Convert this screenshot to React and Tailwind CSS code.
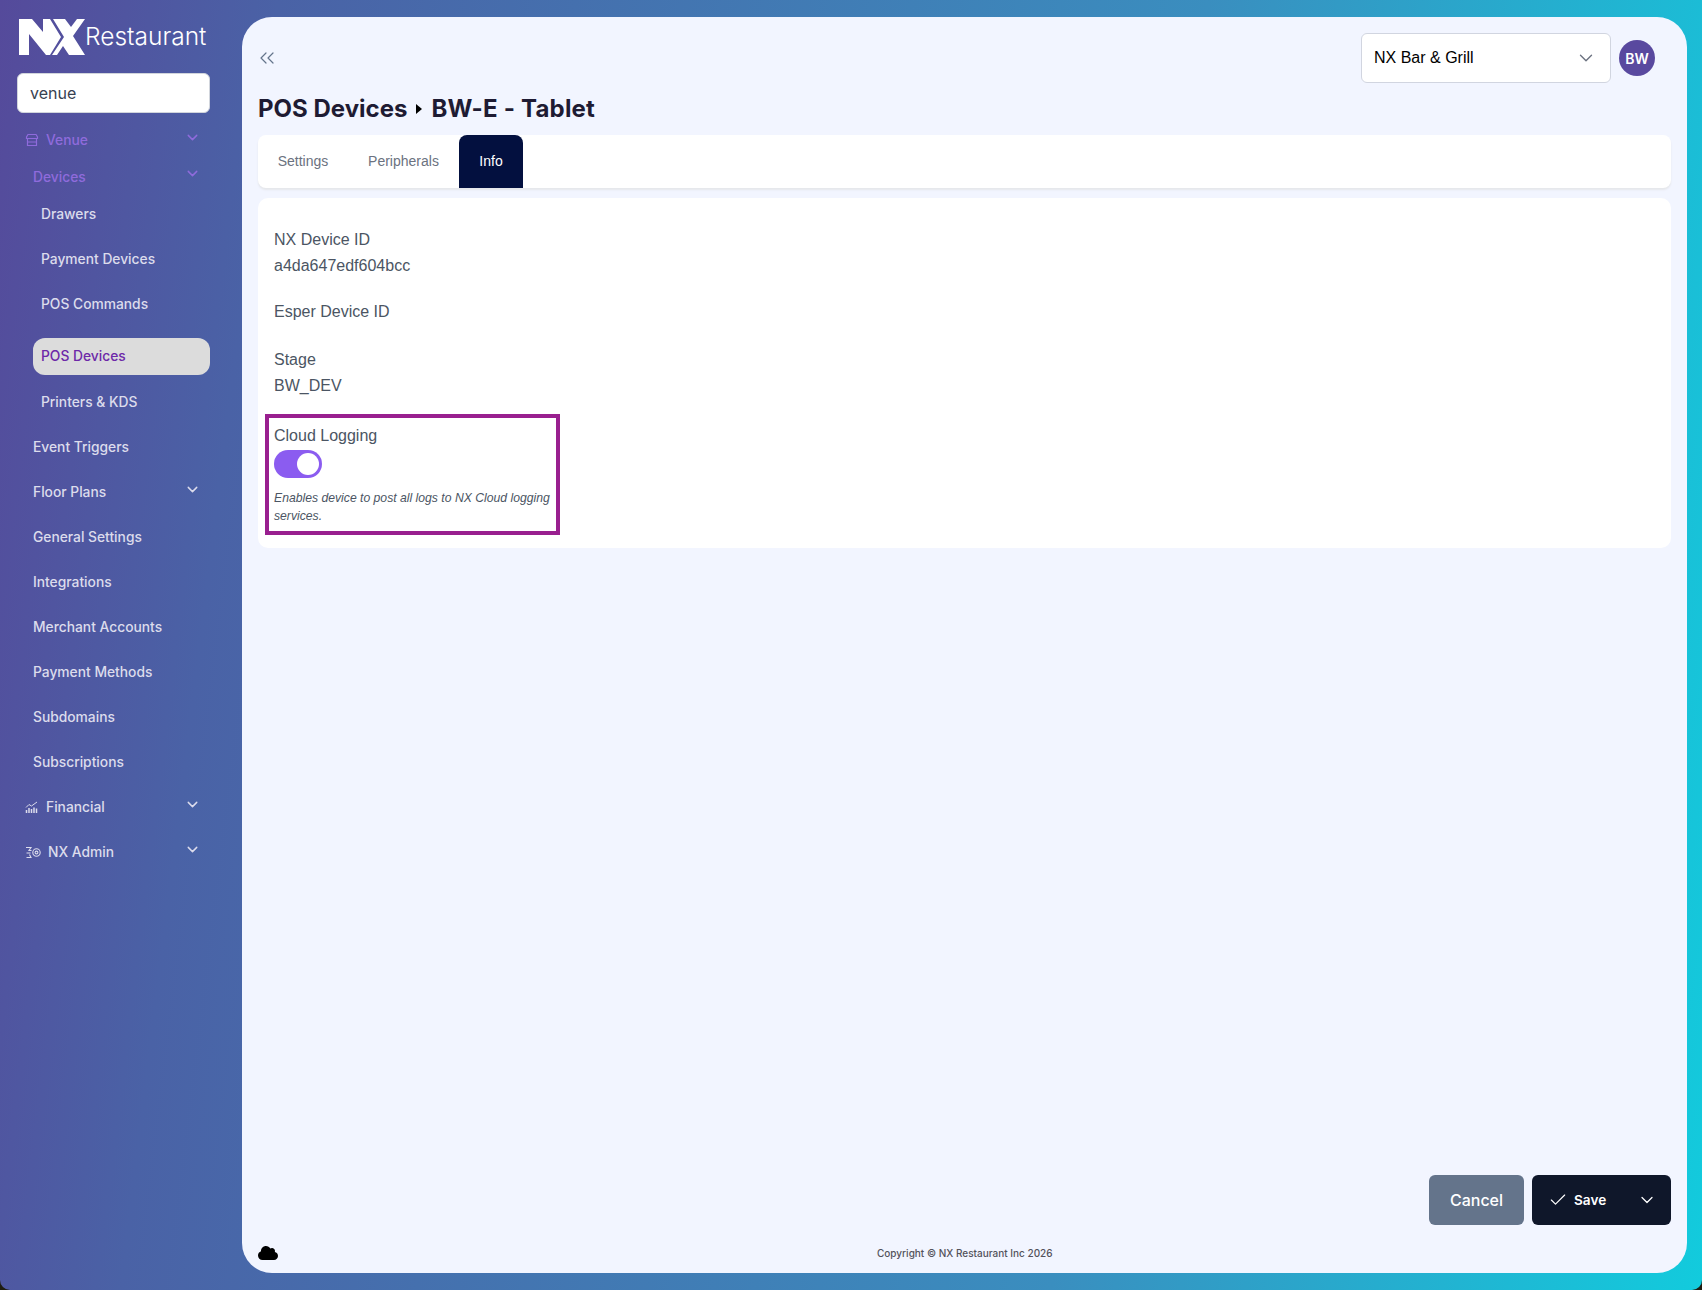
import { ChevronDown, ChevronsLeft, Check } from "lucide-react"
import { FaCloud } from "react-icons/fa"

const FONT = "font-['Inter','Noto_Sans',sans-serif]"
const BODY = "font-['Liberation_Sans',Arial,sans-serif]"

function NxLogo() {
  return (
    <svg width="68" height="38" viewBox="0 0 68 38" className="shrink-0">
      <polygon fill="#fff" points="0,1 13,1 24,14 24,1 31,1 42,19 31,37 27,37 10,16 10,37 0,37" />
      <polygon fill="#fff" points="34,1 46,1 52,9 58,1 66,1 54,18 66,37 50,37 44,28 38,37 33,37 45,19" />
    </svg>
  )
}

function StoreIcon() {
  return (
    <svg width="14" height="14" viewBox="0 0 14 14" fill="none" stroke="currentColor" strokeWidth="1.2">
      <path d="M3 1.500h8l1.500 2.500v1.500h-11V4z" />
      <path d="M2.500 5.500v7h9v-7M2.500 9h9" />
    </svg>
  )
}

function ChartIcon() {
  return (
    <svg width="14" height="13" viewBox="0 0 14 13" fill="none" stroke="currentColor" strokeWidth="1">
      <path d="M1 6.500l3-3 2.500 1.500L12 1" />
      <path d="M1.500 12V9M4 12V7M6.500 12V8M9 12V6.500M11.500 12V7.500" strokeWidth="1.500" />
    </svg>
  )
}

function AdminIcon() {
  return (
    <svg width="16" height="13" viewBox="0 0 16 13" fill="none" stroke="currentColor" strokeWidth="1.100">
      <circle cx="11.500" cy="6.500" r="3.700" />
      <circle cx="11.500" cy="6.500" r="1.400" />
      <path d="M1 1.500h5L4 4.500h2.500M1.500 7h4M1.500 11.500h4.500l-1.500-3" />
    </svg>
  )
}

function NavItem({ label, icon, chevron, indent = "pl-[33px]" }) {
  return (
    <div className={`h-[45px] flex items-center relative text-[13.8px] font-medium text-[#dcdcec] ${indent}`}>
      {icon && <span className="mr-[7px] flex items-center">{icon}</span>}
      <span>{label}</span>
      {chevron && <ChevronDown size={17} strokeWidth={2} className="absolute right-[41px] top-[11px]" />}
    </div>
  )
}

function Sidebar() {
  return (
    <aside className="w-[242px] shrink-0 flex flex-col">
      <div className="h-[73px] pl-[19px] pt-[18px] flex items-start">
        <NxLogo />
        <span className="text-white text-[24.5px] font-light leading-[36px] -ml-[2px]">Restaurant</span>
      </div>
      <div className="ml-[17px] mr-[32px] h-[40px] rounded-[6px] bg-white border border-gray-300 flex items-center pl-[12px] text-[16px] text-[#374151]">venue</div>

      <div className="mt-[9px] flex flex-col">
        <div className="h-[36px] flex items-center relative pl-[25px] text-[13.8px] font-medium text-[#8f6bdc]">
          <StoreIcon />
          <span className="ml-[7px]">Venue</span>
          <ChevronDown size={17} className="absolute right-[41px] top-[7px]" />
        </div>
        <div className="h-[38px] flex items-center relative pl-[33px] text-[13.8px] font-medium text-[#8f6bdc]">
          <span>Devices</span>
          <ChevronDown size={17} className="absolute right-[41px] top-[7px]" />
        </div>
        <div className="-mt-[4px]">
          <NavItem label="Drawers" indent="pl-[41px]" />
          <NavItem label="Payment Devices" indent="pl-[41px]" />
          <NavItem label="POS Commands" indent="pl-[41px]" />
        </div>
        <div className="mt-[11px] mb-[5px] ml-[33px] mr-[32px] h-[37px] rounded-[12px] bg-[#dcdcdc] flex items-center pl-[8px] text-[13.8px] font-medium text-[#6d28a8]">POS Devices</div>
        <NavItem label="Printers & KDS" indent="pl-[41px]" />
        <NavItem label="Event Triggers" />
        <NavItem label="Floor Plans" chevron />
        <NavItem label="General Settings" />
        <NavItem label="Integrations" />
        <NavItem label="Merchant Accounts" />
        <NavItem label="Payment Methods" />
        <NavItem label="Subdomains" />
        <NavItem label="Subscriptions" />
        <NavItem label="Financial" icon={<ChartIcon />} chevron indent="pl-[25px]" />
        <NavItem label="NX Admin" icon={<AdminIcon />} chevron indent="pl-[25px]" />
      </div>
    </aside>
  )
}

function Field({ label, value }) {
  return (
    <div className="text-[16px] leading-[26px] text-[#4b5563]">
      <div>{label}</div>
      {value && <div>{value}</div>}
    </div>
  )
}

function Toggle() {
  return (
    <div className="w-[48px] h-[28px] rounded-full bg-[#8b5cf0] flex items-center justify-end pr-[3px]">
      <div className="w-[22px] h-[22px] rounded-full bg-white" />
    </div>
  )
}

function DeviceInfo() {
  return (
    <section className={`${BODY} mt-[10px] h-[350px] rounded-[10px] bg-white pl-[16px] pt-[29px]`}>
      <Field label="NX Device ID" value="a4da647edf604bcc" />
      <div className="mt-[20px]"><Field label="Esper Device ID" /></div>
      <div className="mt-[22px]"><Field label="Stage" value="BW_DEV" /></div>
      <div className="mt-[15px] -ml-[9px] w-[295px] h-[121px] border-[4px] border-[#991f8f] pl-[5px] pt-[6px]">
        <div className="text-[16px] leading-[24px] text-[#4b5563]">Cloud Logging</div>
        <div className="mt-[2px]"><Toggle /></div>
        <p className="mt-[11px] text-[12.2px] leading-[18px] italic text-[#4b5563]">Enables device to post all logs to NX Cloud logging services.</p>
      </div>
    </section>
  )
}

export default function App() {
  return (
    <div className={`${FONT} w-[1702px] h-[1290px] bg-[#1f1d12]`}>
      <div className="w-full h-full flex overflow-hidden rounded-b-[10px] bg-[linear-gradient(97deg,#554a9b_0%,#4a62a6_15%,#3a8ebf_65%,#12cbdd_100%)]">
        <Sidebar />
        <main className="flex-1 mt-[17px] mb-[17px] mr-[15px] rounded-[30px] bg-[#f2f5ff] flex flex-col pl-[16px] pr-[16px]">
          <header className="h-[74px] flex items-start justify-between pt-[16px]">
            <ChevronsLeft size={24} strokeWidth={1.2} className="text-[#64748b] -ml-[3px] mt-[13px]" />
            <div className="flex items-center mr-[16px]">
              <div className={`${BODY} w-[250px] h-[50px] rounded-[6px] bg-white border border-[#d1d5e0] flex items-center justify-between pl-[12px] pr-[13px] text-[16px] text-black`}>
                NX Bar & Grill
                <ChevronDown size={22} strokeWidth={1.5} className="text-[#6b7280]" />
              </div>
              <div className="ml-[8px] w-[36px] h-[36px] rounded-full bg-[#59499f] text-white text-[14px] font-semibold flex items-center justify-center">BW</div>
            </div>
          </header>

          <h1 className="h-[35px] mb-[9px] text-[24px] leading-[35px] font-bold text-[#1e1b33] flex items-center">
            POS Devices
            <span className="mx-[9px] w-0 h-0 border-y-[5px] border-y-transparent border-l-[6px] border-l-black" />
            <span className="tracking-[0.2px]">BW-E - Tablet</span>
          </h1>

          <nav className={`${BODY} h-[53px] rounded-[8px] bg-white shadow-[0_2px_2px_#e5e7eb] flex text-[14px] text-[#6b7280]`}>
            <div className="w-[88px] flex items-center justify-center pl-[2px]">Settings</div>
            <div className="w-[113px] flex items-center justify-center pl-[2px]">Peripherals</div>
            <div className="w-[64px] rounded-t-[8px] bg-[#03103f] text-white flex items-center justify-center">Info</div>
          </nav>

          <DeviceInfo />

          <div className="flex-1" />

          <div className="flex justify-end gap-[8px]">
            <button className="w-[95px] h-[50px] rounded-[6px] bg-[#64748b] text-white text-[16px] font-medium">Cancel</button>
            <button className="w-[139px] h-[50px] rounded-[6px] bg-[#0f172a] text-white text-[13.6px] font-semibold flex items-center pl-[16px] pr-[14px]">
              <Check size={20} strokeWidth={1.4} />
              <span className="ml-[6px]">Save</span>
              <ChevronDown size={20} strokeWidth={1.5} className="ml-auto" />
            </button>
          </div>

          <footer className="h-[48px] flex items-center relative pt-[8px]">
            <FaCloud size={20} className="text-black" />
            <span className="absolute left-[619px] text-[10px] font-medium text-[#52525b]">Copyright © NX Restaurant Inc 2026</span>
          </footer>
        </main>
      </div>
    </div>
  )
}
